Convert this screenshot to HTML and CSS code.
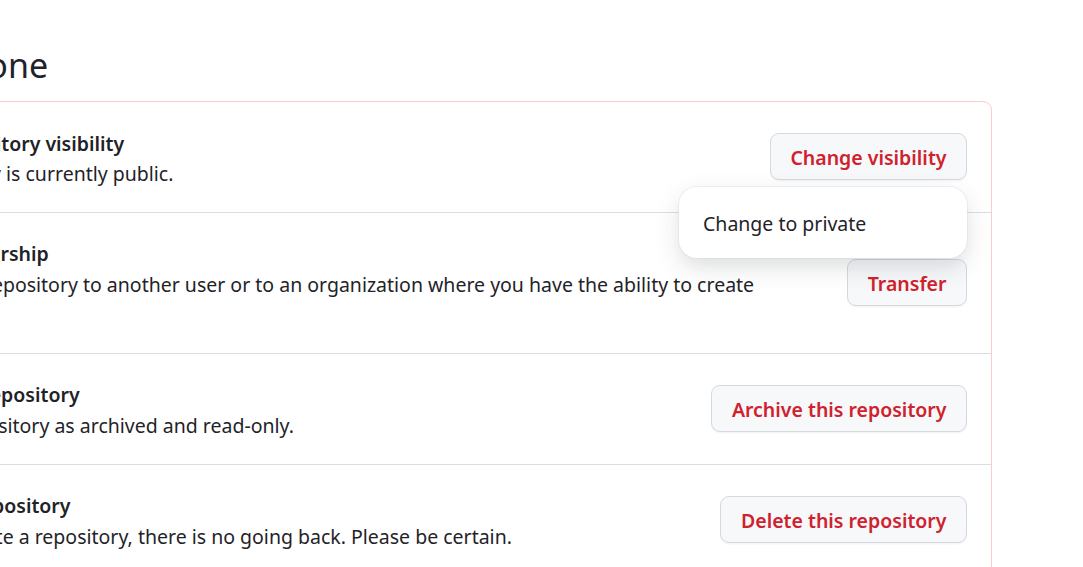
FILE: index.html
```html
<!DOCTYPE html>
<html lang="en">
<head>
<meta charset="utf-8">
<title>Danger Zone</title>
<link rel="stylesheet" href="styles.css">
</head>
<body>
<div class="page">
  <h2 class="subhead">Danger Zone</h2>
  <div class="danger-box">
    <div class="row">
      <div class="info">
        <div class="title">Change repository visibility</div>
        <div class="desc">This repository is currently public.</div>
      </div>
      <div class="dropdown">
        <button class="btn">Change visibility</button>
        <div class="menu">
          <div class="menu-item">Change to private</div>
        </div>
      </div>
    </div>
    <div class="row">
      <div class="info">
        <div class="title">Transfer ownership</div>
        <div class="desc">Transfer this repository to another user or to an organization where you have the ability to create repositories.</div>
      </div>
      <button class="btn">Transfer</button>
    </div>
    <div class="row">
      <div class="info">
        <div class="title">Archive this repository</div>
        <div class="desc">Mark this repository as archived and read-only.</div>
      </div>
      <button class="btn">Archive this repository</button>
    </div>
    <div class="row">
      <div class="info">
        <div class="title">Delete this repository</div>
        <div class="desc">Once you delete a repository, there is no going back. Please be certain.</div>
      </div>
      <button class="btn">Delete this repository</button>
    </div>
  </div>
</div>
</body>
</html>
```

FILE: styles.css
```css
html, body {
  margin: 0;
  padding: 0;
  background: #ffffff;
  overflow: hidden;
}

body {
  font-family: "Noto Sans", "Open Sans", sans-serif;
  color: #1f2328;
  font-size: 19.5px;
}

.page {
  margin-left: -160px;
  padding: 38px 91px 0 0;
}

.subhead {
  margin: 0 0 9px 0;
  font-size: 34px;
  line-height: 54px;
  font-weight: 400;
  color: #1f2328;
}

.danger-box {
  border: 1px solid #ffcaca;
  border-radius: 9px;
}

.row {
  display: flex;
  align-items: center;
  gap: 24px;
  padding: 24px;
  border-top: 1px solid #d8dee4;
}

.row:first-child {
  border-top: none;
}

.info {
  flex: 1;
  min-width: 0;
}

.title {
  font-weight: 600;
  line-height: 30.8px;
  position: relative;
  top: 2.5px;
}

.desc {
  line-height: 30.8px;
  position: relative;
  top: 2.5px;
}

.btn {
  flex: none;
  height: 47px;
  padding: 0 19.5px;
  border: 1px solid #d5d9de;
  border-radius: 9px;
  background: #f6f8fa;
  color: #cf222e;
  font-family: inherit;
  font-size: 19.5px;
  font-weight: 600;
  line-height: 47px;
  box-shadow: 0 1.5px 0 rgba(31, 35, 40, 0.04);
}

.dropdown {
  position: relative;
  flex: none;
}

.menu {
  position: absolute;
  top: calc(100% + 7px);
  right: 0;
  width: 288px;
  padding: 11.5px 12px;
  box-sizing: border-box;
  background: #ffffff;
  border-radius: 18px;
  box-shadow: 0 0 0 1px rgba(208, 215, 222, 0.35), 0 9px 27px rgba(37, 41, 46, 0.12), 0 9px 18px -4px rgba(37, 41, 46, 0.05);
  z-index: 5;
}

.menu-item {
  height: 48px;
  line-height: 50px;
  padding: 0 12px;
  white-space: nowrap;
}
```
